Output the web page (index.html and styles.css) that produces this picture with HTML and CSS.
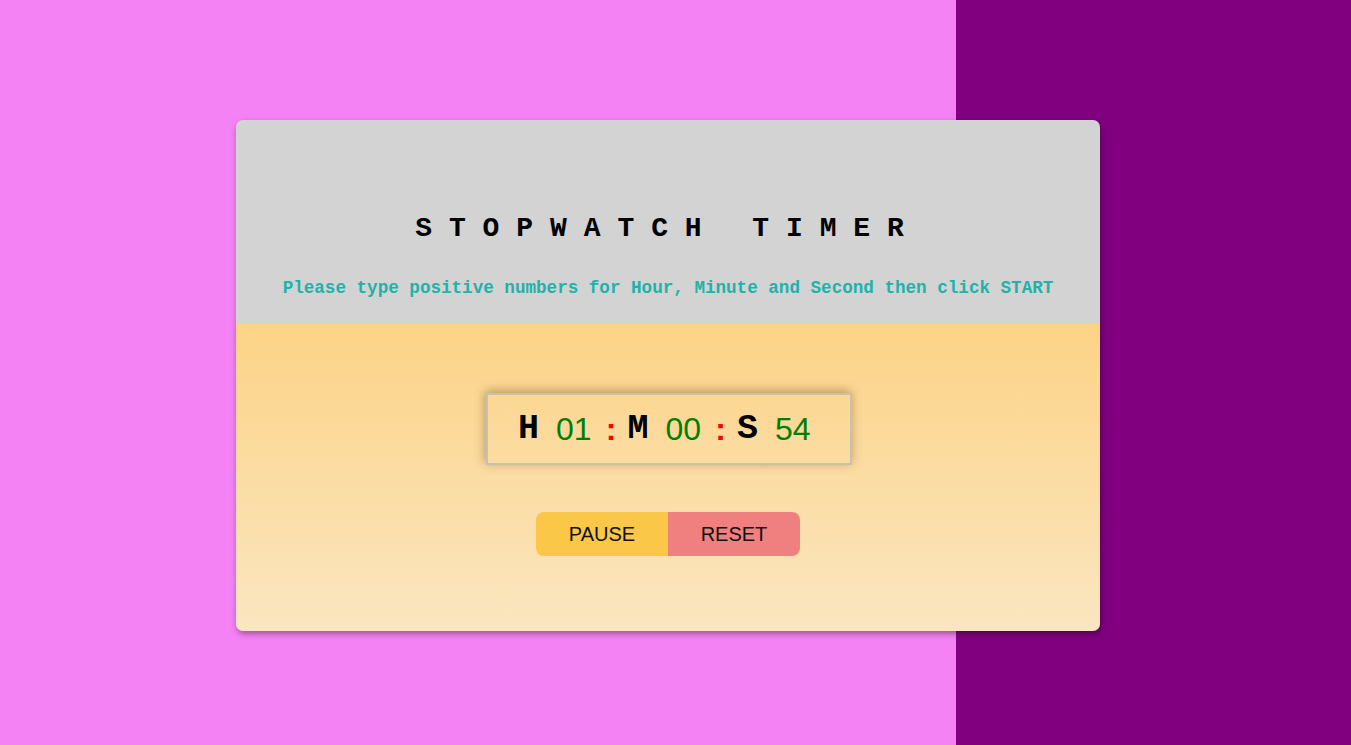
FILE: index.html
```html
<!DOCTYPE html>
<html lang="en">
<head>
<meta charset="utf-8">
<title>Stopwatch Timer</title>
<link rel="stylesheet" href="styles.css">
</head>
<body>
  <main class="card">
    <header class="card-head">
      <h1 class="title">STOPWATCH TIMER</h1>
      <p class="hint">Please type positive numbers for Hour, Minute and Second then click START</p>
    </header>
    <section class="card-body">
      <div class="clock">
        <span class="unit">H</span><span class="num">01</span><span class="colon">:</span><span class="unit after-colon">M</span><span class="num">00</span><span class="colon">:</span><span class="unit after-colon">S</span><span class="num">54</span>
      </div>
      <div class="controls">
        <button class="btn btn-pause" type="button">PAUSE</button><button class="btn btn-reset" type="button">RESET</button>
      </div>
    </section>
  </main>
</body>
</html>
```

FILE: styles.css
```css
html, body {
  margin: 0;
  padding: 0;
}

body {
  min-height: 745px;
  background: linear-gradient(to right, #f582f5 0, #f582f5 956px, #800080 956px, #800080 100%);
  font-family: "Liberation Sans", Arial, sans-serif;
  padding-top: 120px;
  box-sizing: border-box;
}

.card {
  width: 864px;
  margin-left: 236px;
  border-radius: 7px;
  overflow: hidden;
  box-shadow: 1px 3px 6px rgba(0, 0, 0, 0.35);
}

.card-head {
  background: #d3d3d3;
  height: 204px;
  box-sizing: border-box;
  padding-top: 95px;
  text-align: center;
}

.title {
  margin: 0;
  font-family: "Liberation Mono", "Courier New", monospace;
  font-weight: bold;
  font-size: 28px;
  line-height: 28px;
  letter-spacing: 16.9px;
  color: #000;
}

.hint {
  margin: 35px 0 0;
  font-family: "Liberation Mono", "Courier New", monospace;
  font-weight: bold;
  font-size: 17.6px;
  line-height: 20px;
  color: #20b2aa;
}

.card-body {
  height: 307px;
  box-sizing: border-box;
  padding-top: 69px;
  background: linear-gradient(to bottom, #fdd387 0%, #fae6c0 100%);
  display: flex;
  flex-direction: column;
  align-items: center;
}

.clock {
  width: 366px;
  height: 72px;
  box-sizing: border-box;
  margin-left: 2px;
  border: 2px solid #c9c1ae;
  box-shadow: -1px -2px 10px rgba(90, 70, 30, 0.45);
  padding-left: 26.5px;
  display: flex;
  align-items: center;
}

.unit {
  width: 28px;
  text-align: center;
  font-family: "Liberation Mono", "Courier New", monospace;
  font-weight: bold;
  font-size: 35px;
  line-height: 40px;
  color: #000;
}

.after-colon {
  margin-left: 6px;
}

.num {
  width: 36px;
  margin-left: 13.5px;
  font-family: "Liberation Sans", Arial, sans-serif;
  font-size: 32px;
  line-height: 40px;
  color: #008000;
}

.colon {
  width: 14px;
  margin-left: 12px;
  text-align: center;
  font-family: "Liberation Sans", Arial, sans-serif;
  font-weight: bold;
  font-size: 32px;
  line-height: 40px;
  color: #ff0000;
}

.controls {
  margin-top: 47px;
  display: flex;
}

.btn {
  width: 132px;
  height: 44px;
  border: 0;
  margin: 0;
  padding: 0;
  font-family: "Liberation Sans", Arial, sans-serif;
  font-size: 20px;
  color: #111;
  cursor: pointer;
}

.btn-pause {
  background: #fac748;
  border-radius: 8px 0 0 8px;
}

.btn-reset {
  background: #f08080;
  border-radius: 0 8px 8px 0;
}
```
